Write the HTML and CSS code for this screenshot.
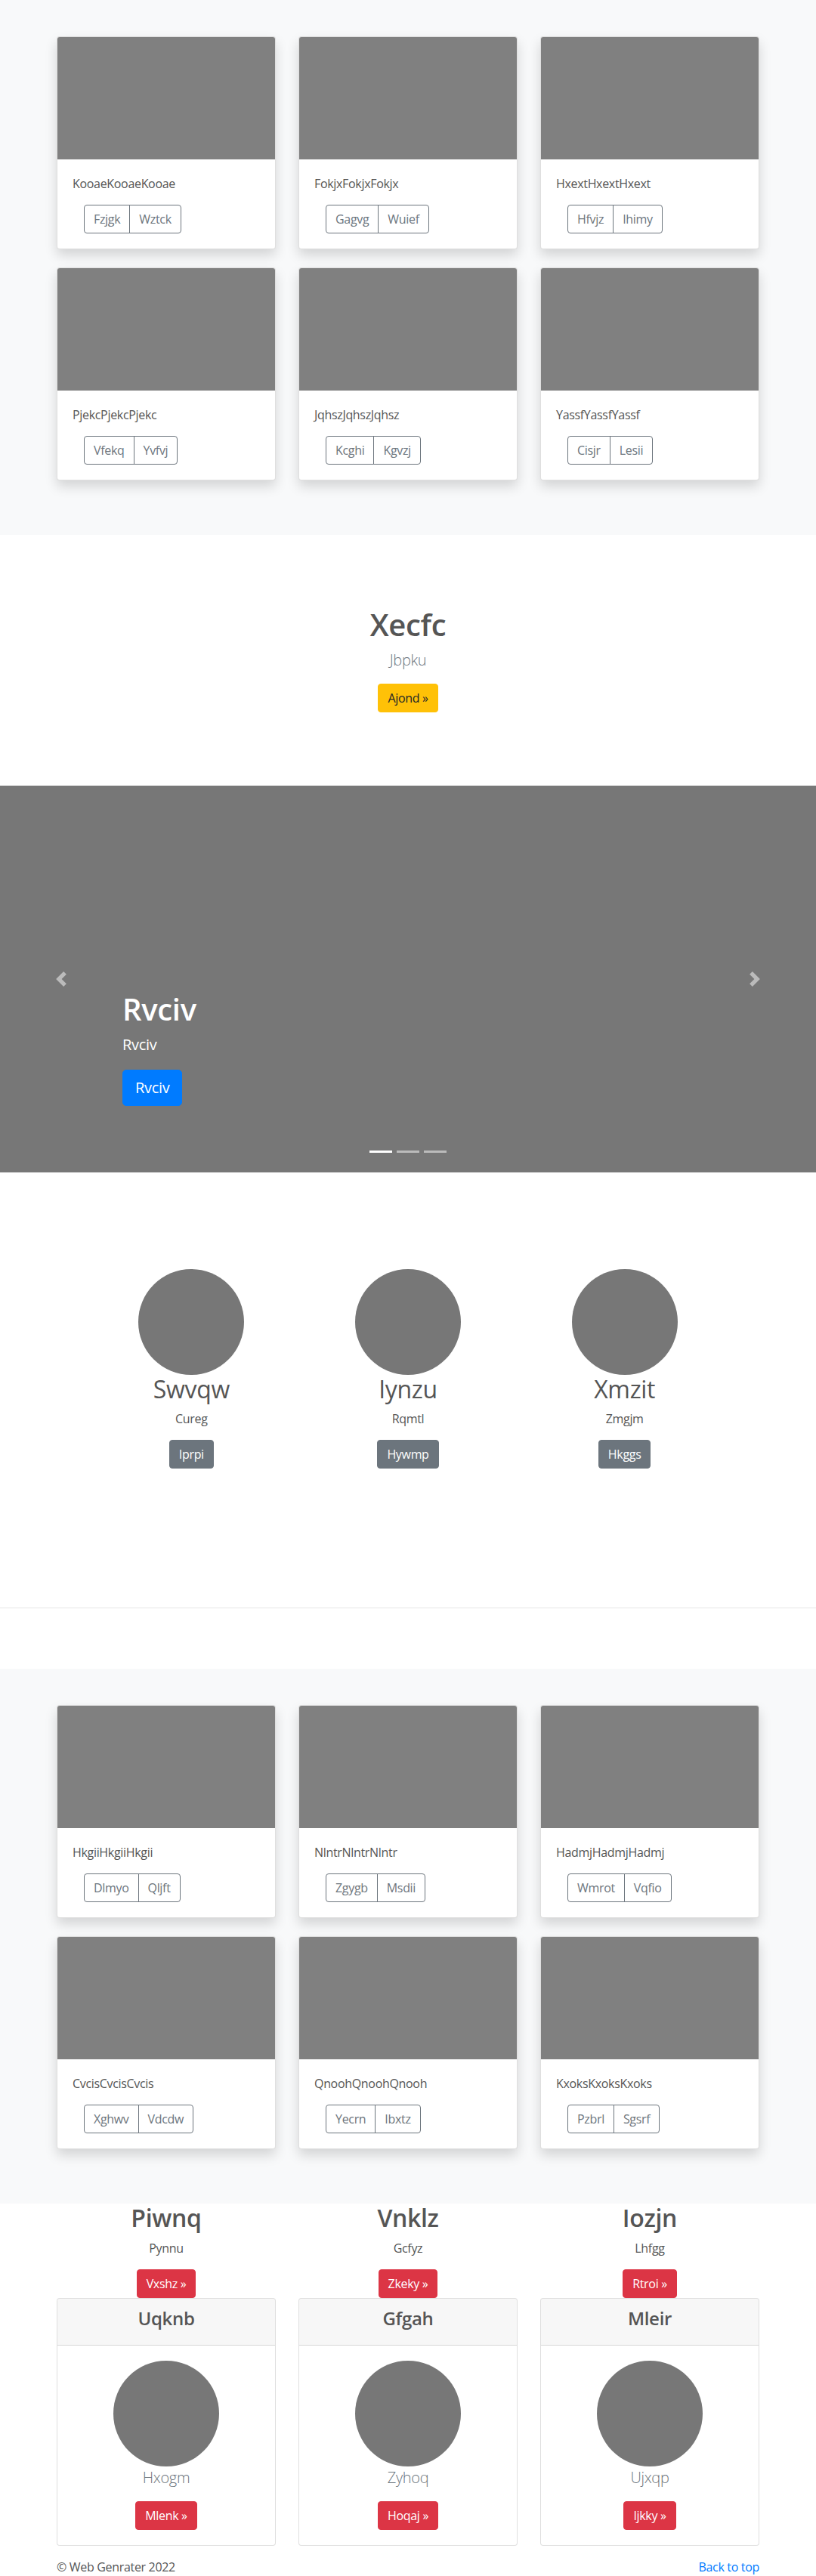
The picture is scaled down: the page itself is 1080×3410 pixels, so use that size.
FILE: index.html
```html
<!DOCTYPE html>
<html lang="en">
<head>
<meta charset="utf-8">
<title>Web Genrater</title>
<link rel="stylesheet" href="styles.css">
</head>
<body>

<section class="album">
  <div class="container">
    <div class="card-grid">
      <div class="card">
        <div class="card-img"></div>
        <div class="card-body">
          <p class="card-text">KooaeKooaeKooae</p>
          <div class="btn-group"><button class="btn btn-outline">Fzjgk</button><button class="btn btn-outline">Wztck</button></div>
        </div>
      </div>
      <div class="card">
        <div class="card-img"></div>
        <div class="card-body">
          <p class="card-text">FokjxFokjxFokjx</p>
          <div class="btn-group"><button class="btn btn-outline">Gagvg</button><button class="btn btn-outline">Wuief</button></div>
        </div>
      </div>
      <div class="card">
        <div class="card-img"></div>
        <div class="card-body">
          <p class="card-text">HxextHxextHxext</p>
          <div class="btn-group"><button class="btn btn-outline">Hfvjz</button><button class="btn btn-outline">Ihimy</button></div>
        </div>
      </div>
      <div class="card">
        <div class="card-img"></div>
        <div class="card-body">
          <p class="card-text">PjekcPjekcPjekc</p>
          <div class="btn-group"><button class="btn btn-outline">Vfekq</button><button class="btn btn-outline">Yvfvj</button></div>
        </div>
      </div>
      <div class="card">
        <div class="card-img"></div>
        <div class="card-body">
          <p class="card-text">JqhszJqhszJqhsz</p>
          <div class="btn-group"><button class="btn btn-outline">Kcghi</button><button class="btn btn-outline">Kgvzj</button></div>
        </div>
      </div>
      <div class="card">
        <div class="card-img"></div>
        <div class="card-body">
          <p class="card-text">YassfYassfYassf</p>
          <div class="btn-group"><button class="btn btn-outline">Cisjr</button><button class="btn btn-outline">Lesii</button></div>
        </div>
      </div>
    </div>
  </div>
</section>

<section class="hero">
  <div class="container">
    <h1>Xecfc</h1>
    <p class="lead">Jbpku</p>
    <p class="action"><a class="btn btn-warning" href="#">Ajond &raquo;</a></p>
  </div>
</section>

<section class="carousel">
  <a class="control prev" href="#">
    <svg width="20" height="20" viewBox="0 0 8 8"><path fill="#fff" d="M5.25 0l-4 4 4 4 1.5-1.5L4.25 4l2.5-2.5L5.25 0z"/></svg>
  </a>
  <a class="control next" href="#">
    <svg width="20" height="20" viewBox="0 0 8 8"><path fill="#fff" d="M2.75 0l-1.5 1.5L3.75 4l-2.5 2.5L2.75 8l4-4-4-4z"/></svg>
  </a>
  <div class="caption">
    <h1>Rvciv</h1>
    <p>Rvciv</p>
    <p class="caption-action"><a class="btn btn-lg btn-primary" href="#">Rvciv</a></p>
  </div>
  <ol class="indicators">
    <li class="active"></li>
    <li></li>
    <li></li>
  </ol>
</section>

<section class="marketing">
  <div class="marketing-row">
    <div class="feature">
      <div class="circle"></div>
      <h2>Swvqw</h2>
      <p>Cureg</p>
      <p class="action"><a class="btn btn-secondary" href="#">Iprpi</a></p>
    </div>
    <div class="feature">
      <div class="circle"></div>
      <h2>Iynzu</h2>
      <p>Rqmtl</p>
      <p class="action"><a class="btn btn-secondary" href="#">Hywmp</a></p>
    </div>
    <div class="feature">
      <div class="circle"></div>
      <h2>Xmzit</h2>
      <p>Zmgjm</p>
      <p class="action"><a class="btn btn-secondary" href="#">Hkggs</a></p>
    </div>
  </div>
</section>

<hr class="divider">

<section class="album">
  <div class="container">
    <div class="card-grid">
      <div class="card">
        <div class="card-img"></div>
        <div class="card-body">
          <p class="card-text">HkgiiHkgiiHkgii</p>
          <div class="btn-group"><button class="btn btn-outline">Dlmyo</button><button class="btn btn-outline">Qljft</button></div>
        </div>
      </div>
      <div class="card">
        <div class="card-img"></div>
        <div class="card-body">
          <p class="card-text">NlntrNlntrNlntr</p>
          <div class="btn-group"><button class="btn btn-outline">Zgygb</button><button class="btn btn-outline">Msdii</button></div>
        </div>
      </div>
      <div class="card">
        <div class="card-img"></div>
        <div class="card-body">
          <p class="card-text">HadmjHadmjHadmj</p>
          <div class="btn-group"><button class="btn btn-outline">Wmrot</button><button class="btn btn-outline">Vqfio</button></div>
        </div>
      </div>
      <div class="card">
        <div class="card-img"></div>
        <div class="card-body">
          <p class="card-text">CvcisCvcisCvcis</p>
          <div class="btn-group"><button class="btn btn-outline">Xghwv</button><button class="btn btn-outline">Vdcdw</button></div>
        </div>
      </div>
      <div class="card">
        <div class="card-img"></div>
        <div class="card-body">
          <p class="card-text">QnoohQnoohQnooh</p>
          <div class="btn-group"><button class="btn btn-outline">Yecrn</button><button class="btn btn-outline">Ibxtz</button></div>
        </div>
      </div>
      <div class="card">
        <div class="card-img"></div>
        <div class="card-body">
          <p class="card-text">KxoksKxoksKxoks</p>
          <div class="btn-group"><button class="btn btn-outline">Pzbrl</button><button class="btn btn-outline">Sgsrf</button></div>
        </div>
      </div>
    </div>
  </div>
</section>

<section class="offers">
  <div class="container">
    <div class="cols">
      <div class="col">
        <h2>Piwnq</h2>
        <p>Pynnu</p>
        <div class="action"><a class="btn btn-danger" href="#">Vxshz &raquo;</a></div>
      </div>
      <div class="col">
        <h2>Vnklz</h2>
        <p>Gcfyz</p>
        <div class="action"><a class="btn btn-danger" href="#">Zkeky &raquo;</a></div>
      </div>
      <div class="col">
        <h2>Iozjn</h2>
        <p>Lhfgg</p>
        <div class="action"><a class="btn btn-danger" href="#">Rtroi &raquo;</a></div>
      </div>
    </div>
    <div class="cols">
      <div class="pcard">
        <div class="pcard-header"><h4>Uqknb</h4></div>
        <div class="pcard-body">
          <div class="circle"></div>
          <p class="lead">Hxogm</p>
          <div class="action"><a class="btn btn-danger" href="#">Mlenk &raquo;</a></div>
        </div>
      </div>
      <div class="pcard">
        <div class="pcard-header"><h4>Gfgah</h4></div>
        <div class="pcard-body">
          <div class="circle"></div>
          <p class="lead">Zyhoq</p>
          <div class="action"><a class="btn btn-danger" href="#">Hoqaj &raquo;</a></div>
        </div>
      </div>
      <div class="pcard">
        <div class="pcard-header"><h4>Mleir</h4></div>
        <div class="pcard-body">
          <div class="circle"></div>
          <p class="lead">Ujxqp</p>
          <div class="action"><a class="btn btn-danger" href="#">Ijkky &raquo;</a></div>
        </div>
      </div>
    </div>
  </div>
</section>

<footer class="footer">
  <div class="container footer-row">
    <p>&copy; Web Genrater 2022</p>
    <p><a href="#">Back to top</a></p>
  </div>
</footer>

</body>
</html>
```

FILE: styles.css
```css
* {
  box-sizing: border-box;
}

body {
  margin: 0;
  background: #fff;
  color: #555;
  font-family: "Open Sans", "Noto Sans", "Liberation Sans", sans-serif;
  font-size: 16px;
  line-height: 1.5;
  letter-spacing: -0.02em;
}

p {
  margin: 0 0 16px;
}

h1, h2, h4 {
  margin: 0 0 8px;
  line-height: 1.2;
  font-weight: 600;
}

.container {
  width: 930px;
  margin: 0 auto;
}

/* ---------- album ---------- */
.album {
  background: #f8f9fa;
  padding: 48px 0;
}

.card-grid {
  display: grid;
  grid-template-columns: repeat(3, 290px);
  column-gap: 30px;
}

.card {
  background: #fff;
  border: 1px solid rgba(0, 0, 0, 0.125);
  border-radius: 4px;
  margin-bottom: 24px;
  box-shadow: 0 8px 16px rgba(0, 0, 0, 0.15);
  overflow: hidden;
}

.card-img {
  height: 162px;
  background: #808080;
}

.card-body {
  padding: 20px;
}

.btn-group {
  display: inline-flex;
  margin-left: 15px;
}

.btn {
  display: inline-block;
  font-family: inherit;
  font-size: 16px;
  font-weight: 400;
  line-height: 24px;
  letter-spacing: inherit;
  padding: 6px 12px;
  border: 1px solid transparent;
  border-radius: 4px;
  text-decoration: none;
  text-align: center;
  cursor: pointer;
}

.btn-outline {
  color: #6c757d;
  border-color: #6c757d;
  background: transparent;
}

.btn-group .btn:first-child {
  border-top-right-radius: 0;
  border-bottom-right-radius: 0;
}

.btn-group .btn + .btn {
  margin-left: -1px;
  border-top-left-radius: 0;
  border-bottom-left-radius: 0;
}

.btn-warning {
  background: #ffc107;
  border-color: #ffc107;
  color: #212529;
}

.btn-primary {
  background: #007bff;
  border-color: #007bff;
  color: #fff;
}

.btn-secondary {
  background: #6c757d;
  border-color: #6c757d;
  color: #fff;
}

.btn-danger {
  background: #dc3545;
  border-color: #dc3545;
  color: #fff;
}

.btn-lg {
  font-size: 20px;
  line-height: 30px;
  padding: 8px 16px;
  border-radius: 5px;
}

.action {
  display: flex;
  justify-content: center;
}

.lead {
  font-size: 20px;
  font-weight: 300;
  line-height: 30px;
  color: #6c757d;
}

/* ---------- hero ---------- */
.hero {
  text-align: center;
  padding: 95px 0 97px;
}

.hero h1 {
  font-size: 40px;
}

.hero .action {
  margin: 0;
}

/* ---------- carousel ---------- */
.carousel {
  position: relative;
  height: 512px;
  background: #777;
  margin-bottom: 64px;
}

.control {
  position: absolute;
  top: 0;
  bottom: 0;
  width: 15%;
  display: flex;
  align-items: center;
  justify-content: center;
  opacity: 0.5;
}

.control.prev {
  left: 0;
}

.control.next {
  right: 0;
}

.caption {
  position: absolute;
  left: 15%;
  right: 15%;
  bottom: 88px;
  color: #fff;
  text-align: left;
}

.caption h1 {
  font-size: 40px;
}

.caption p {
  font-size: 20px;
  line-height: 30px;
  margin-bottom: 18px;
}

.caption .caption-action {
  margin: 0;
  display: flex;
}

.indicators {
  position: absolute;
  left: 15%;
  right: 15%;
  bottom: 0;
  margin: 0 0 16px;
  padding: 0;
  list-style: none;
  display: flex;
  justify-content: center;
}

.indicators li {
  box-sizing: content-box;
  width: 30px;
  height: 3px;
  margin: 0 3px;
  background: #fff;
  background-clip: padding-box;
  border-top: 10px solid transparent;
  border-bottom: 10px solid transparent;
  opacity: 0.5;
}

.indicators li.active {
  opacity: 1;
}

/* ---------- marketing ---------- */
.marketing {
  padding: 64px 0;
}

.marketing-row {
  width: 860px;
  margin: 0 auto;
  display: grid;
  grid-template-columns: repeat(3, 1fr);
}

.feature {
  text-align: center;
  margin-bottom: 24px;
}

.circle {
  width: 140px;
  height: 140px;
  border-radius: 50%;
  background: #777;
  margin: 0 auto;
}

.feature h2 {
  font-size: 32px;
  font-weight: 400;
}

.feature p {
  margin: 0 12px 16px;
}

.divider {
  margin: 80px 0;
  border: 0;
  border-top: 1px solid rgba(0, 0, 0, 0.1);
  height: 0;
}

/* ---------- offers ---------- */
.cols {
  display: grid;
  grid-template-columns: repeat(3, 290px);
  column-gap: 30px;
  text-align: center;
}

.col h2 {
  font-size: 32px;
}

.pcard {
  border: 1px solid rgba(0, 0, 0, 0.125);
  border-radius: 4px;
  background: #fff;
}

.pcard-header {
  background: rgba(0, 0, 0, 0.03);
  border-bottom: 1px solid rgba(0, 0, 0, 0.125);
  border-radius: 3px 3px 0 0;
  padding: 12px 20px;
}

.pcard-header h4 {
  font-size: 24px;
  margin: 0 0 8px;
}

.pcard-body {
  padding: 20px;
}

.pcard-body .lead {
  margin: 0 0 16px;
}

/* ---------- footer ---------- */
.footer {
  padding-top: 16px;
}

.footer-row {
  display: flex;
  justify-content: space-between;
}

.footer a {
  color: #007bff;
  text-decoration: none;
}
```
